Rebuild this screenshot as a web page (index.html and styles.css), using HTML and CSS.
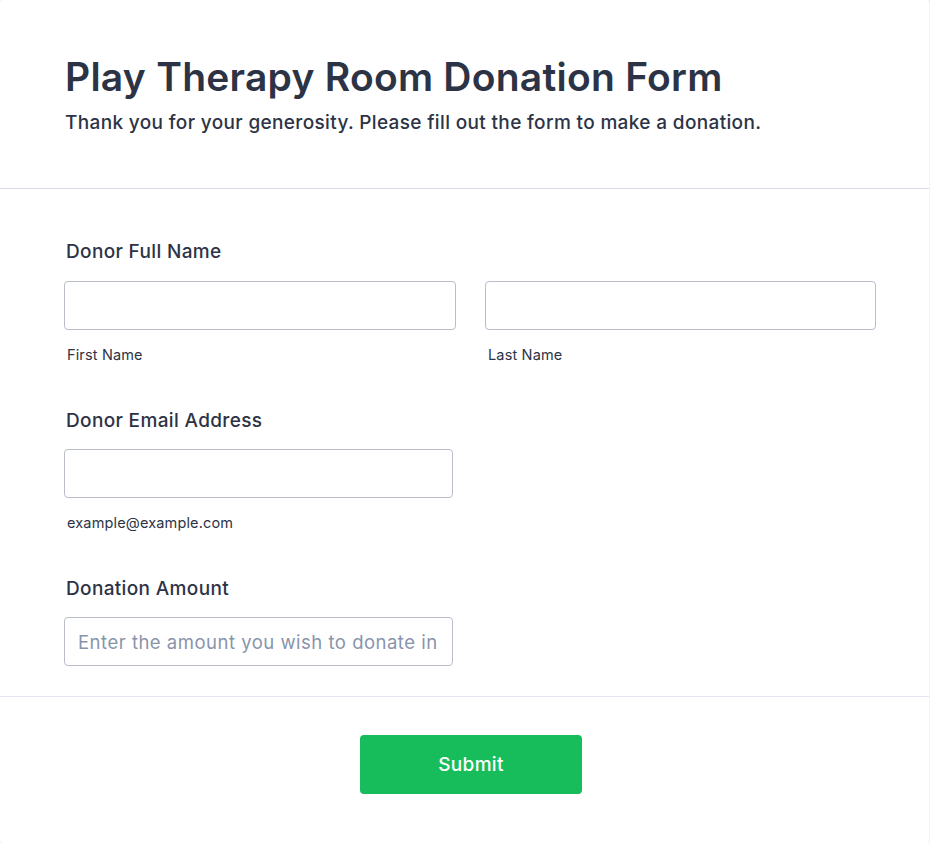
FILE: index.html
```html
<!DOCTYPE html>
<html lang="en">
<head>
<meta charset="utf-8">
<title>Play Therapy Room Donation Form</title>
<link rel="stylesheet" href="styles.css">
</head>
<body>
<div class="card">
  <header class="form-header">
    <h1 class="form-title">Play Therapy Room Donation Form</h1>
    <p class="form-subtitle">Thank you for your generosity. Please fill out the form to make a donation.</p>
  </header>
  <section class="form-body">
    <div class="question">
      <label class="q-label">Donor Full Name</label>
      <div class="name-row">
        <div class="name-col">
          <input class="text-input" type="text">
          <span class="sublabel">First Name</span>
        </div>
        <div class="name-col">
          <input class="text-input" type="text">
          <span class="sublabel">Last Name</span>
        </div>
      </div>
    </div>
    <div class="question tight">
      <label class="q-label">Donor Email Address</label>
      <div class="single">
        <input class="text-input" type="email">
        <span class="sublabel">example@example.com</span>
      </div>
    </div>
    <div class="question tight last">
      <label class="q-label">Donation Amount</label>
      <div class="single">
        <input class="text-input amount" type="text" placeholder="Enter the amount you wish to donate in USD">
      </div>
    </div>
  </section>
  <footer class="form-footer">
    <button class="submit-btn" type="button">Submit</button>
  </footer>
</div>
</body>
</html>
```

FILE: styles.css
```css
* { box-sizing: border-box; }
html, body {
  margin: 0;
  padding: 0;
  background: #f3f3fe;
}
body {
  font-family: Inter, "Noto Sans", sans-serif;
  color: #2c3345;
}
.card {
  width: 929px;
  height: 843px;
  background: #ffffff;
  border-radius: 4px;
}
.form-header {
  padding: 53px 65px 0;
  height: 189px;
  border-bottom: 1px solid #d8dae9;
}
.form-title {
  margin: 0;
  font-size: 39px;
  line-height: 48px;
  font-weight: 600;
  letter-spacing: 0.25px;
  color: #2c3345;
}
.form-subtitle {
  margin: 10px 0 0;
  font-size: 19px;
  line-height: 24px;
  font-weight: 500;
  letter-spacing: 0.35px;
  color: #2c3345;
}
.form-body {
  padding: 51px 55px 0 64px;
  height: 508px;
  border-bottom: 1px solid #e6e6f2;
}
.question {
  display: flex;
  flex-direction: column;
  margin-bottom: 45px;
}
.question.last { margin-bottom: 0; }
.q-label {
  font-size: 19px;
  line-height: 24px;
  font-weight: 500;
  letter-spacing: 0.35px;
  padding-left: 2px;
  margin-bottom: 17px;
}
.question.tight .q-label { margin-bottom: 16px; }
.name-row {
  display: grid;
  grid-template-columns: 392px 391px;
  column-gap: 29px;
}
.name-col {
  display: flex;
  flex-direction: column;
}
.single {
  width: 389px;
  display: flex;
  flex-direction: column;
}
.text-input {
  width: 100%;
  height: 49px;
  border: 1px solid #b8bdc9;
  border-radius: 4px;
  background: #ffffff;
  padding: 0 13px;
  font-family: Inter, "Noto Sans", sans-serif;
  font-size: 18.5px;
  letter-spacing: 0.5px;
  color: #2c3345;
  outline: none;
}
.text-input::placeholder {
  color: #8894ab;
}
.sublabel {
  margin-top: 16px;
  padding-left: 3px;
  font-size: 14.5px;
  line-height: 18px;
  letter-spacing: 0.15px;
  color: #2c3345;
}
.form-footer {
  display: flex;
  justify-content: center;
  padding-top: 38px;
}
.submit-btn {
  width: 222px;
  height: 59px;
  margin-left: 13px;
  border: none;
  border-radius: 4px;
  background: #18bd5b;
  color: #ffffff;
  font-family: Inter, "Noto Sans", sans-serif;
  font-size: 19px;
  font-weight: 500;
  letter-spacing: 0.3px;
}
```
